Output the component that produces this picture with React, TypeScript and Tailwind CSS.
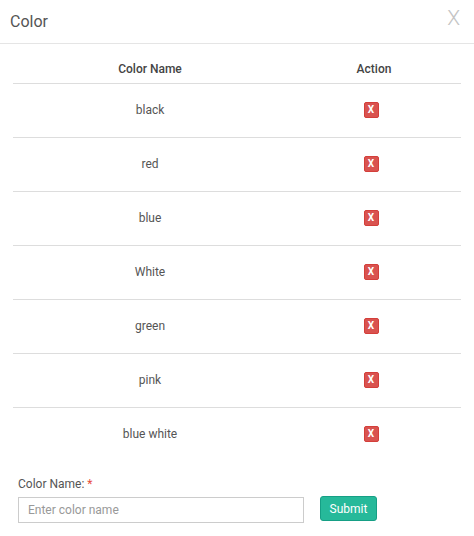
const colors = ['black', 'red', 'blue', 'White', 'green', 'pink', 'blue white']

export default function App() {
  return (
    <div className="h-[536px] w-[474px] bg-white font-['Roboto',sans-serif] text-[#555]">
      <div className="flex h-[44px] items-center justify-between border-b border-[#e5e5e5] pl-[10px] pr-[14px]">
        <h4 className="text-[16px] leading-none text-[#555]">Color</h4>
        <button className="-mt-[6px] text-[21px] font-light leading-none text-[#c4c4c4]">X</button>
      </div>

      <div className="px-[13px] pt-[11px]">
        <table className="w-full border-collapse text-[12px]">
          <thead>
            <tr className="h-[28px] border-b border-[#ddd]">
              <th className="w-[274px] font-medium text-[#444]">Color Name</th>
              <th className="font-medium text-[#444]">Action</th>
            </tr>
          </thead>
          <tbody>
            {colors.map((c, i) => (
              <tr key={c} className={i < colors.length - 1 ? 'h-[54px] border-b border-[#ddd]' : 'h-[54px]'}>
                <td className="text-center">{c}</td>
                <td className="text-center">
                  <button className="mr-[6px] inline-flex h-[16px] w-[15px] -translate-y-[1px] items-center justify-center rounded-[2px] border border-[#d43f3a] bg-[#d9534f] text-[10px] font-bold leading-none text-white">
                    X
                  </button>
                </td>
              </tr>
            ))}
          </tbody>
        </table>
      </div>

      <div className="px-[18px] pt-[15px]">
        <label className="block text-[12px] leading-[17px] text-[#555]">
          Color Name: <span className="text-[#e74c3c]">*</span>
        </label>
        <div className="mt-[4px] flex items-start gap-[16px]">
          <input
            placeholder="Enter color name"
            className="h-[26px] w-[286px] border border-[#ccc] px-[9px] text-[12px] text-[#555] outline-none placeholder:text-[#999]"
          />
          <button className="-mt-[1px] h-[25px] w-[57px] rounded-[3px] border border-[#169f85] bg-[#26b99a] text-[12px] text-white">
            Submit
          </button>
        </div>
      </div>
    </div>
  )
}
